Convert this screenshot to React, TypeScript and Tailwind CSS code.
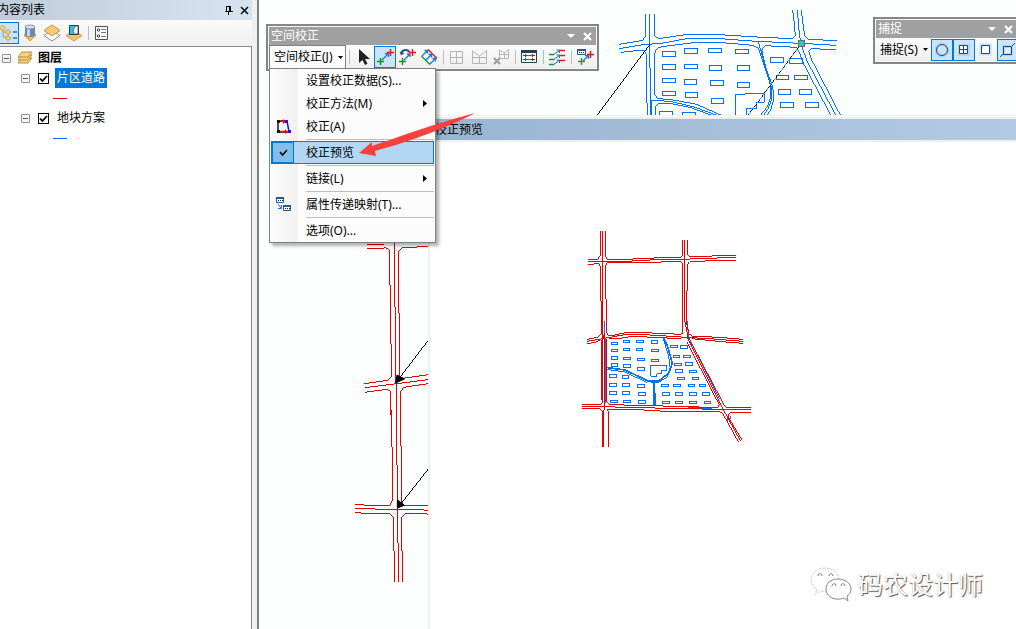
import React, { useState, type ReactNode } from 'react';

const BLUE = '#0070ff';
const RED = '#e60000';

function Icon({ children, size = 18 }: { children: ReactNode; size?: number }) {
  return (
    <svg width={size} height={size} viewBox={`0 0 ${size} ${size}`} fill="none" aria-hidden="true" className="shrink-0">
      {children}
    </svg>
  );
}

function ToolButton({ label, active = false, narrow = false, children }: {
  label: string; active?: boolean; narrow?: boolean; children: ReactNode;
}) {
  return (
    <button
      type="button"
      aria-label={label}
      className={`flex h-[22px] shrink-0 items-center justify-center ${narrow ? 'w-[19px] border-l-0' : 'w-[22px]'} ${
        active ? 'border border-[#0078d7] bg-[#cce4f7]' : ''
      }`}
    >
      {children}
    </button>
  );
}

function Divider() {
  return (
    <span className="flex w-[6px] shrink-0 justify-center">
      <span className="h-[14px] w-px bg-[#bdbdbd]" />
    </span>
  );
}

/* ---------- Contents panel ---------- */

function Expander() {
  return (
    <button type="button" aria-label="折叠" className="flex size-[9px] shrink-0 items-center justify-center rounded-[1px] border border-[#919191] bg-[#f6f6f6]">
      <span className="h-px w-[5px] bg-[#3a5fa8]" />
    </button>
  );
}

function LayerRow({ name, selected = false, color }: { name: string; selected?: boolean; color: 'red' | 'blue' }) {
  const [on, setOn] = useState(true);
  return (
    <li>
      <div className="flex h-5 items-center pl-[21px]">
        <Expander />
        <label className="ml-2 flex items-center">
          <span className="grid size-[11px] shrink-0 place-items-center">
            <input
              type="checkbox"
              checked={on}
              onChange={() => setOn(!on)}
              className="col-start-1 row-start-1 size-[11px] appearance-none border border-black bg-white"
            />
            {on && (
              <svg width="9" height="9" viewBox="0 0 9 9" fill="none" className="pointer-events-none col-start-1 row-start-1">
                <path d="M1 4.5 3.4 7 8 2" stroke="#000" strokeWidth="1.8" />
              </svg>
            )}
          </span>
          <span className={`ml-[6px] flex h-5 items-center px-[2px] ${selected ? 'bg-[#0078d7] text-white' : ''}`}>{name}</span>
        </label>
      </div>
      <div className="flex h-5 items-center pl-[53px]">
        <span className={`h-px w-[14px] ${color === 'red' ? 'bg-[#e60000]' : 'bg-[#0070ff]'}`} />
      </div>
    </li>
  );
}

function ContentsPanel() {
  return (
    <aside className="flex w-[259px] shrink-0 overflow-hidden border-r-2 border-[#7f7f7f] bg-[#f0f0f0]">
      <div className="flex w-[252px] flex-col">
        <header className="flex h-5 items-center bg-linear-to-r from-[#bfcddb] to-[#d6e4f2]">
          <h2 className="-ml-[3px] flex-1">内容列表</h2>
          <button type="button" aria-label="自动隐藏" className="flex w-4 justify-center">
            <Icon size={9}>
              <path d="M2.5 5V.5h4V5M.5 5.5h8M4.5 5.5V9M5.5 1v4" stroke="#000" shapeRendering="crispEdges" />
            </Icon>
          </button>
          <button type="button" aria-label="关闭" className="flex w-4 justify-center">
            <Icon size={9}><path d="M1 1l7 7M8 1 1 8" stroke="#000" strokeWidth="1.5" /></Icon>
          </button>
        </header>
        <div role="toolbar" aria-label="列出方式" className="flex h-[26px] items-center bg-linear-to-b from-[#fafafa] to-[#f0f0f0]">
          <ToolButton label="按绘制顺序列出" active narrow>
            <Icon>
              <path d="M3 5v8h4M3 8h5" stroke="#9c9c9c" />
              <path d="M2.500 1 5.500 4 2.500 7-.5 4z" fill="#f5cf79" stroke="#c99a3f" />
              <path d="M8 5.500 11 8 8 10.500 5 8zM8 11.500 11 14 8 16.500 5 14z" fill="#f5cf79" stroke="#c99a3f" />
              <path d="M13 8h4M13 14h4" stroke="#2d75b5" strokeWidth="1.500" />
            </Icon>
          </ToolButton>
          <ToolButton label="按源列出">
            <Icon>
              <path d="M3 11l6-4 6 4-6 6z" fill="#f0bd58" stroke="#d39b34" />
              <path d="M4 3v8c0 2.500 10 2.500 10 0V3z" fill="#6c88ab" />
              <path d="M6 3v9h3V3z" fill="#c5d5e8" />
              <ellipse cx="9" cy="3" rx="5" ry="2" fill="#d7e1ed" stroke="#53708f" strokeWidth=".7" />
            </Icon>
          </ToolButton>
          <ToolButton label="按可见性列出">
            <Icon>
              <path d="M9 6l8 5.500L9 17l-8-5.500z" fill="#fff" stroke="#8d8d8d" />
              <path d="M9 1l8 5.500L9 12 1 6.500z" fill="#f4c978" stroke="#c9923b" />
            </Icon>
          </ToolButton>
          <ToolButton label="按选择列出">
            <Icon>
              <path d="M9 6l8 5.500L9 17l-8-5.500z" fill="#f4c466" stroke="#d7a03b" />
              <path d="M4.500 1.500h9v9h-9z" fill="#25c8e9" stroke="#1d4052" />
              <path d="M10 2h3v8H9l-1-3z" fill="#f5f5f5" stroke="#444" strokeWidth=".7" />
            </Icon>
          </ToolButton>
          <Divider />
          <ToolButton label="选项">
            <Icon size={14}>
              <path d="M.5.5h12v13H.500z" fill="#fff" stroke="#44546a" />
              <path d="M6 3.500h5M6 6.500h5M6 10.500h5" stroke="#777" />
              <circle cx="3.500" cy="4" r="1.200" stroke="#333" /><circle cx="3.500" cy="10" r="1.200" stroke="#333" />
            </Icon>
          </ToolButton>
        </div>
        <div className="flex-1 border-t border-r border-[#828790] bg-white pt-px">
          <div className="flex h-5 items-center pl-[2px]">
            <Expander />
            <span className="ml-[6px]">
              <Icon size={16}>
                {[10, 7, 4].map((y) => (
                  <path key={y} d={`M5 ${y - 2}h10l-4 5H1z`} fill="#f6d28a" stroke="#bf8b35" />
                ))}
              </Icon>
            </span>
            <span className="ml-[5px] font-bold">图层</span>
          </div>
          <ul>
            <LayerRow name="片区道路" selected color="red" />
            <LayerRow name="地块方案" color="blue" />
          </ul>
        </div>
      </div>
    </aside>
  );
}

/* ---------- Map drawings ---------- */

type Box = [number, number, number, number];

const parcelBoxes: Box[] = [
  [217, 154, 40, 16], [283, 145, 40, 15], [355, 145, 40, 13], [436, 148, 40, 12],
  [217, 193, 40, 15], [283, 193, 40, 13], [358, 196, 37, 15], [442, 196, 37, 15],
  [217, 235, 40, 12], [283, 238, 37, 15], [361, 241, 40, 15], [442, 247, 37, 15],
  [217, 274, 40, 12], [286, 277, 37, 15], [364, 295, 37, 15], [208, 334, 40, 15], [277, 337, 40, 15],
  [541, 172, 40, 15], [598, 175, 40, 15], [559, 226, 37, 12], [613, 226, 40, 12],
  [565, 268, 37, 15], [628, 268, 37, 15], [571, 307, 40, 15], [646, 307, 40, 15],
];

const previewBoxes: Box[] = [
  [109, 37, 19, 7], [145, 31, 19, 7], [184, 31, 22, 7], [229, 31, 19, 9],
  [109, 58, 19, 7], [145, 55, 19, 7], [184, 55, 19, 8], [229, 58, 22, 7],
  [109, 79, 19, 9], [145, 82, 22, 8], [187, 85, 22, 7], [229, 88, 22, 7],
  [109, 100, 19, 9], [145, 103, 22, 9], [187, 112, 22, 9],
  [103, 133, 22, 9], [142, 136, 19, 9], [103, 160, 22, 9], [142, 160, 22, 9], [187, 163, 22, 9],
  [103, 184, 22, 9], [142, 184, 22, 9], [190, 187, 22, 9], [106, 211, 22, 7], [145, 211, 22, 7], [190, 211, 22, 9],
  [286, 46, 22, 7], [316, 46, 22, 9], [295, 76, 19, 7], [325, 76, 22, 7], [298, 100, 22, 7], [331, 97, 22, 9],
  [301, 118, 22, 9], [343, 121, 22, 7], [307, 142, 22, 7], [352, 142, 19, 7],
  [259, 163, 22, 7], [295, 163, 22, 7], [340, 163, 19, 7], [373, 163, 19, 7],
  [262, 187, 22, 9], [301, 187, 22, 9], [343, 187, 22, 9], [382, 187, 22, 9],
  [262, 214, 22, 7], [301, 214, 22, 7], [343, 214, 22, 7], [388, 214, 19, 7],
];

function Boxes({ items }: { items: Box[] }) {
  return <>{items.map(([x, y, w, h]) => <rect key={`${x}-${y}`} x={x} y={y} width={w} height={h} />)}</>;
}

function MapDrawing() {
  return (
    <svg width="757" height="629" viewBox="259 0 757 629" fill="none" shapeRendering="crispEdges" className="absolute top-0 left-0" role="img" aria-label="地图">
      <g transform="translate(590 0) scale(.333333)" stroke={BLUE} strokeWidth="3">
        <path d="M167 42V108L158 121 88 133M179 42V132L182 345M194 42V108L206 116 285 104H390L500 111 605 116 616 108 613 70 608 30" />
        <path d="M88 146 160 134 215 130 290 116H390L500 124 632 130 738 136M92 157 150 151 162 150 170 165V290L173 345" />
        <path d="M185 345V301M181 301 240 304 310 320 378 345M197 345V318L205 310 245 311 300 322 362 345" />
        <path d="M506 146 490 136 395 128H310L214 140 200 146 194 160V285L204 296 245 299 320 313 392 345" />
        <path d="M506 146 520 190 540 250 542 290 532 320 512 345M505 124 512 150 535 230 546 270V295L535 325 522 345M525 137 515 150 527 200 548 262 552 295 542 330 532 345M525 137 620 142" />
        <path d="M622 30 626 80 632 130 652 185 737 345M634 30 640 80 644 108 656 118 740 122M620 142 628 158 640 190 722 345M738 149 665 146 656 154 665 180 751 345" />
        <path d="M438 345V283L523 280V307H500V325H470V345" />
        <Boxes items={parcelBoxes} />
        <path d="M180 133 22 345M632 133 475 345" stroke="#000" />
        <path d="M632 133 475 345" stroke="#17c9d4" strokeDasharray="8 10" />
        <rect x="625" y="121" width="18" height="18" fill="#19ccd8" stroke="#666" />
      </g>
      <g transform="translate(345 235) scale(.333333)" stroke={RED} strokeWidth="3">
        <path d="M66 29H116M66 40H116M116 36 128 41 134 49V145L137 160V325L140 335V422L130 436 58 446" />
        <path d="M149 20V210L152 225V440L155 455V540M160 60V228L164 240V422L174 430 249 419M249 34 170 39 160 49V60" />
        <path d="M60 458 249 434M60 472 124 463 138 470V540M249 446 176 457 167 470V540" />
        <path d="M249 317 152 444" stroke="#000" />
        <path d="M152 444 156 420 178 432z" fill="#000" stroke="#000" shapeRendering="auto" />
      </g>
      <g transform="translate(345 410) scale(.333333)" stroke={RED} strokeWidth="3">
        <path d="M140 0V108L143 120V270L134 286H82L30 284M155 0V160L158 175V395L161 405V516M167 0V105L170 115V276L178 287H249" />
        <path d="M30 296H82L102 299H230L249 302M30 308 82 311H134L146 322V420L149 430V516M249 314 245 311H182L170 322V420L173 430V516" />
        <path d="M249 178 158 294" stroke="#000" />
        <path d="M157 294V269L178 286z" fill="#000" stroke="#000" shapeRendering="auto" />
      </g>
    </svg>
  );
}

function PreviewDrawing() {
  return (
    <svg width="180" height="228" viewBox="575 225 180 228" fill="none" shapeRendering="crispEdges" role="img" aria-label="校正结果预览">
      <g transform="translate(575 330) scale(.333333)" stroke={BLUE} strokeWidth="3">
        <path d="M88-28V220M93 25V220M337-28 341 22 434 208" />
        <Boxes items={previewBoxes} />
        <path d="M93 112 150 120 222 154H250L280 130 292 100 278 50 265 20" strokeWidth="5" />
        <path d="M93 118 150 126 215 157M228 158H250L275 142 286 120 281 80 265 25" strokeWidth="3" />
        <path d="M238 156V229M242 190V229" strokeWidth="5" />
        <path d="M227 106H275V121H260V131H245V139H227z" />
        <path d="M212 227H265M338 232 412 236M85 260V266M459 260V272M466 258V268M465 239H492" />
      </g>
      <g transform="translate(575 225) scale(.333333)" stroke={RED} strokeWidth="3">
        <path d="M76 18V92L68 103H39M83 18V325L88 345M91 18V92L97 103H152L260 98H317L322 90V45M329 45V285L338 330 341 345M338 45V90L344 96 413 93 483 92" />
        <path d="M39 109H152L260 103H317L483 97M39 118H55L69 114 76 124V225L80 230V325L70 336 37 343M97 114 152 113 260 111 317 109 323 118V325L317 328 210 323H150L112 332 100 332 94 320V225L91 220V123L97 114M483 106 413 107 344 110 337 118V196L334 200V290L341 325 350 333 430 337 503 343" />
        <path d="M37 349 67 344 88 340 150 329H210L317 336 415 342 503 349M37 355 60 353 74 345M101 341H128L160 336H215L317 341M350 341 390 345 440 350 503 355" />
      </g>
      <g transform="translate(575 330) scale(.333333)" stroke={RED} strokeWidth="3">
        <path d="M83 0V215L76 224H21M89 10V230L86 245V350M80 30V210M95 28V215L104 224 190 226 370 231 427 233 433 225 335 35M337 22 443 235 497 334M345 37 354 48 448 226 456 233 528 233" />
        <path d="M21 230H85L190 233 380 237 440 240 528 240M21 236 76 237 83 246V350M101 350V246L97 239H190L270 244 430 244 443 250 491 337M528 247H467L460 253V262L502 331" />
      </g>
    </svg>
  );
}

/* ---------- Floating toolbars ---------- */

function FloatingBar({ title, children }: { title: string; children: ReactNode }) {
  return (
    <div className="border-2 border-[#868686]">
      <div className="border border-[#f5f5f5]">
        <header className="flex h-[18px] items-center bg-[#a0a0a0] pr-px pl-[2px] text-white">
          <span className="flex-1">{title}</span>
          <button type="button" aria-label="工具条选项" className="flex w-4 justify-center">
            <Icon size={8}><path d="M0 2h8L4 6z" fill="#fff" /></Icon>
          </button>
          <button type="button" aria-label="关闭" className="flex w-4 justify-center">
            <Icon size={9}><path d="M1 1l7 7M8 1 1 8" stroke="#fff" strokeWidth="2.200" /></Icon>
          </button>
        </header>
        {children}
      </div>
    </div>
  );
}

function DropMark() {
  return <Icon size={5}><path d="M0 1h5L2.500 4z" fill="#000" /></Icon>;
}

function AdjustToolbar() {
  return (
    <FloatingBar title="空间校正">
      <div className="flex h-[23px] items-center bg-linear-to-b from-[#fcfcfc] to-[#eeeeee]">
        <button type="button" aria-haspopup="menu" aria-expanded="true" className="flex h-[23px] w-[77px] shrink-0 items-center justify-between border border-b-0 border-[#808080] bg-[#fcfcfc] pr-[2px] pl-1 whitespace-nowrap">
          空间校正(J)<DropMark />
        </button>
        <Divider />
        <ToolButton label="编辑工具">
          <Icon><path d="M5 1v14l3.500-3L11 17l2.500-1.200L11 11h5z" fill="#222" /></Icon>
        </ToolButton>
        <ToolButton label="新建位移链接" active>
          <Icon>
            <path d="M6 12 12 6M9 5.500h3.500V9" stroke="#1978d4" strokeWidth="1.300" />
            <path d="M4.500 10v7M1 13.500h7" stroke="#009a27" strokeWidth="1.500" />
            <path d="M14.500 1v7M11 4.500h7" stroke="#e31919" strokeWidth="1.500" />
          </Icon>
        </ToolButton>
        <ToolButton label="修改链接">
          <Icon>
            <path d="M6 12 12 6M9 6h3v3" stroke="#256eb8" strokeWidth="1.300" />
            <path d="M3.500 5c1-3.500 6-4 8-1" stroke="#26547c" strokeWidth="2" />
            <path d="M1.500 3.500 6.500 5 3 7.500z" fill="#26547c" />
            <path d="M4.500 10v7M1 13.500h7" stroke="#1b8d37" strokeWidth="1.500" />
            <path d="M14.500 1v7M11 4.500h7" stroke="#e31919" strokeWidth="1.500" />
          </Icon>
        </ToolButton>
        <ToolButton label="多位移链接">
          <Icon>
            <path d="M8 1.500 17 10.500" stroke="#e31919" strokeWidth="1.500" />
            <path d="M1.500 8 10 16.500" stroke="#1b9d37" strokeWidth="1.500" />
            <path d="M2 8l5.500-5.500M6 12l5.500-5.500M10 16l5.500-5.500M4.500 2.500h3v3M8.500 6.500h3v3M12.500 10.500h3v3" stroke="#1978d4" strokeWidth="1.300" />
          </Icon>
        </ToolButton>
        <Divider />
        <ToolButton label="新建标识链接">
          <Icon><path d="M2.500 3.500h12v12h-12zM8.500 3.500v12M2.500 9.500h12" stroke="#b5b5b5" /></Icon>
        </ToolButton>
        <ToolButton label="边匹配">
          <Icon><path d="M2.500 3v12.500h14V2.500L9.500 8zM2.500 9.500h14M9.500 8v7" stroke="#b5b5b5" /></Icon>
        </ToolButton>
        <ToolButton label="清除边匹配">
          <Icon>
            <path d="M7.500 2v8.500h9V1.500L12 5zM7.500 6.500h9M12.500 5v6" stroke="#b5b5b5" />
            <path d="M2 10l6 6M8 10l-6 6" stroke="#9f9f9f" strokeWidth="2.200" />
          </Icon>
        </ToolButton>
        <Divider />
        <ToolButton label="查看链接表">
          <Icon>
            <path d="M1.500 3.500h15v11h-15z" fill="#fff" stroke="#253c59" />
            <path d="M1 3.500h16" stroke="#253c59" strokeWidth="3" />
            <path d="M5 7.500h8M5 11.500h8" stroke="#1978d4" />
            <path d="M5.500 6v3M3 7.500h5M5.500 10v3M3 11.500h5" stroke="#087c2c" />
            <path d="M12.500 6v3M10 7.500h5M12.500 10v3M10 11.500h5" stroke="#d31919" />
          </Icon>
        </ToolButton>
        <Divider />
        <ToolButton label="边捕捉">
          <Icon>
            <path d="M1 6.500h5M1 11.500h5M1 16.500h5" stroke="#13983b" strokeWidth="1.300" />
            <path d="M12 2.500h5M12 7.500h5M12 12.500h5" stroke="#e31919" strokeWidth="1.300" />
            <path d="M5 7l7-5M5 12l7-5M5 17l7-5M8.500 2h3v3M8.500 7h3v3M8.500 12h3v3" stroke="#246dab" />
          </Icon>
        </ToolButton>
        <Divider />
        <ToolButton label="属性传递">
          <Icon>
            <path d="M1.500 1.500h8v5h-8z" fill="#fff" stroke="#245a8f" />
            <path d="M1 2h9" stroke="#245a8f" strokeWidth="2" />
            <path d="M3 4.500h5" stroke="#222" strokeDasharray="1 1" />
            <path d="M7 13l5-5M9 7.500h3.500V11" stroke="#1978d4" strokeWidth="1.300" />
            <path d="M5.500 10v7M2 13.500h7" stroke="#3a963b" strokeWidth="1.500" />
            <path d="M14.500 3v7M11 6.500h7" stroke="#e31919" strokeWidth="1.500" />
          </Icon>
        </ToolButton>
      </div>
    </FloatingBar>
  );
}

function MenuItem({ text, icon, submenu = false, checked = false }: {
  text: string; icon?: ReactNode; submenu?: boolean; checked?: boolean;
}) {
  return (
    <li role="none">
      <button
        type="button"
        role={checked ? 'menuitemcheckbox' : 'menuitem'}
        aria-checked={checked ? true : undefined}
        className={`flex h-[23px] w-full items-center ${checked ? 'border border-[#0078d7] bg-[#b3d7f3]' : 'border border-transparent'}`}
      >
        <span className={`flex w-[22px] shrink-0 items-center justify-center ${checked ? 'h-[21px] border border-[#0078d7] bg-[#83bdec]' : ''}`}>{icon}</span>
        <span className="ml-3 flex-1 text-left whitespace-nowrap">{text}</span>
        {submenu && <span className="mr-1"><Icon size={7}><path d="M1 0v7l4-3.500z" fill="#000" /></Icon></span>}
      </button>
    </li>
  );
}

function MenuRule() {
  return (
    <li role="separator" className="flex h-[3px] items-center pl-[35px]">
      <span className="h-px flex-1 bg-[#bdbdbd]" />
    </li>
  );
}

function AdjustMenu() {
  return (
    <ul role="menu" aria-label="空间校正" className="w-[167px] border border-[#808080] bg-[#fcfcfc] bg-linear-to-r from-[#fcfcfc] from-0% via-[#f0f0f0] via-[28px] to-[#fcfcfc] to-[28px] px-px shadow-[3px_3px_3px_rgba(0,0,0,0.3)]">
      <MenuItem text="设置校正数据(S)..." />
      <MenuItem text="校正方法(M)" submenu />
      <MenuItem
        text="校正(A)"
        icon={
          <Icon size={16}>
            <path d="M3 2v11M2 2h9M2 13h12" stroke="#111" strokeWidth="1.500" />
            <path d="M5 2h5M5 12.500h6" stroke="#f00" strokeWidth="1.500" />
            <path d="M8 0l3 2.500L8 5zM10 10l3 3-3 2z" fill="#f00" />
            <path d="M12 2l2 11" stroke="#1515e8" strokeWidth="1.500" />
            <path d="M10 1h3v3h-3zM13 11h3v3h-3z" fill="#1515e8" />
            <path d="M2 1h3v3H2zM2 11h3v3H2z" fill="#111" />
          </Icon>
        }
      />
      <MenuRule />
      <MenuItem text="校正预览" checked icon={<Icon size={9}><path d="M1 4l2.500 3L8 2" stroke="#000" strokeWidth="1.500" /></Icon>} />
      <MenuRule />
      <MenuItem text="链接(L)" submenu />
      <MenuRule />
      <MenuItem
        text="属性传递映射(T)..."
        icon={
          <Icon size={16}>
            <path d="M1.500 .5h7v5h-7zM8.500 8.500h7v5h-7z" fill="#fff" stroke="#245a8f" />
            <path d="M1 1h8M8 9h8" stroke="#245a8f" strokeWidth="2" />
            <path d="M3 3.500h5M10 11.500h5" stroke="#222" strokeDasharray="1 1" />
            <path d="M3 7l3 4M6.500 8v3.500H3" stroke="#1978d4" />
          </Icon>
        }
      />
      <MenuRule />
      <MenuItem text="选项(O)..." />
    </ul>
  );
}

function SnapToolbar() {
  return (
    <FloatingBar title="捕捉">
      <div className="flex h-[23px] items-center bg-linear-to-b from-[#fcfcfc] to-[#eeeeee]">
        <button type="button" className="flex w-[55px] shrink-0 items-center justify-between pr-[3px] pl-1 whitespace-nowrap">捕捉(S)<DropMark /></button>
        <ToolButton label="点捕捉" active>
          <Icon><circle cx="9" cy="9" r="6" stroke="#a7d7fa" strokeWidth="3" /><circle cx="9" cy="9" r="5.500" stroke="#314466" /></Icon>
        </ToolButton>
        <ToolButton label="端点捕捉" active>
          <Icon><path d="M3 3h12v12H3z" fill="#a7d7fa" /><path d="M4.500 4.500h8v8h-8zM8.500 4v9M4 8.500h9" fill="#eff8ff" stroke="#314466" /></Icon>
        </ToolButton>
        <ToolButton label="折点捕捉">
          <Icon><path d="M4.500 4.500h8v8h-8z" stroke="#b9e2fb" strokeWidth="4" /><path d="M4.500 4.500h8v8h-8z" fill="#fff" stroke="#314466" /></Icon>
        </ToolButton>
        <ToolButton label="边捕捉" active>
          <Icon><path d="M4.500 5.500h8v8h-8z" fill="#e4f4ff" stroke="#a7d7fa" strokeWidth="3" /><path d="M4.500 5.500h8v8h-8zM1 16l3-3M13 5l3-3" stroke="#314466" /></Icon>
        </ToolButton>
      </div>
    </FloatingBar>
  );
}

function PreviewWindow() {
  return (
    <section className="flex h-full flex-col border-t border-l border-[#f0f0f0] bg-white pt-px">
      <div className="flex flex-1 flex-col border-t-2 border-l border-[#eeeeee]">
        <header className="flex h-[21px] shrink-0 items-center bg-linear-to-r from-[#99b4d1] to-[#b2cae5] pl-[5px]">
          <h2>校正预览</h2>
        </header>
        <div className="flex-1 border-t-2 border-[#f0f0f0] pt-[83px] pl-[145px]">
          <PreviewDrawing />
        </div>
      </div>
    </section>
  );
}

function Watermark() {
  return (
    <div className="flex items-center gap-[6px] text-[25px] leading-[36px] whitespace-nowrap text-white [text-shadow:1px_1px_1px_#555,0_0_1px_#aaa]">
      <svg width="42" height="36" viewBox="0 0 42 36" fill="#fff" aria-hidden="true">
        <path d="M15 2C7 2 1 7 1 14c0 4 2 7 6 9l-2 5 6-3c9 2 18-2 18-10C29 7 23 2 15 2z" stroke="#ccc" strokeDasharray="3 1" />
        <path d="M28 13c-7 0-12 4-12 10s6 11 13 10c2 0 3 0 5-1l4 3-1-5c3-2 4-4 4-7 0-6-6-10-13-10z" stroke="#888" />
        <path d="M8 10c0-3 4-3 4 0M19 10c0-3 4-3 4 0M22 20c0-3 4-3 4 0M31 20c0-3 4-3 4 0" fill="none" stroke="#777" />
      </svg>
      <span>码农设计师</span>
    </div>
  );
}

export default function App() {
  return (
    <div className="flex min-h-screen overflow-hidden bg-white font-['Noto_Sans','Noto_Sans_CJK_SC',sans-serif] text-[12px] leading-4 text-black">
      <ContentsPanel />
      <main className="relative min-w-0 flex-1 overflow-hidden bg-[#fdfefe]">
        <MapDrawing />
        <div className="absolute top-[115px] right-0 bottom-0 left-[169px]"><PreviewWindow /></div>
        <div className="absolute top-[24px] left-[7px] w-[333px]"><AdjustToolbar /></div>
        <div className="absolute top-[17px] left-[614px] w-[147px]"><SnapToolbar /></div>
        <div className="absolute top-[68px] left-[10px]"><AdjustMenu /></div>
        <svg width="120" height="50" viewBox="0 0 120 50" aria-hidden="true" className="pointer-events-none absolute top-[111px] left-[98px]">
          <path d="M2 42 15 31 15 35C42 26 70 15 118 2 94 15 55 30 18 40L19 45z" fill="#f8403c" />
        </svg>
        <div className="absolute right-[33px] bottom-[27px]"><Watermark /></div>
      </main>
    </div>
  );
}
